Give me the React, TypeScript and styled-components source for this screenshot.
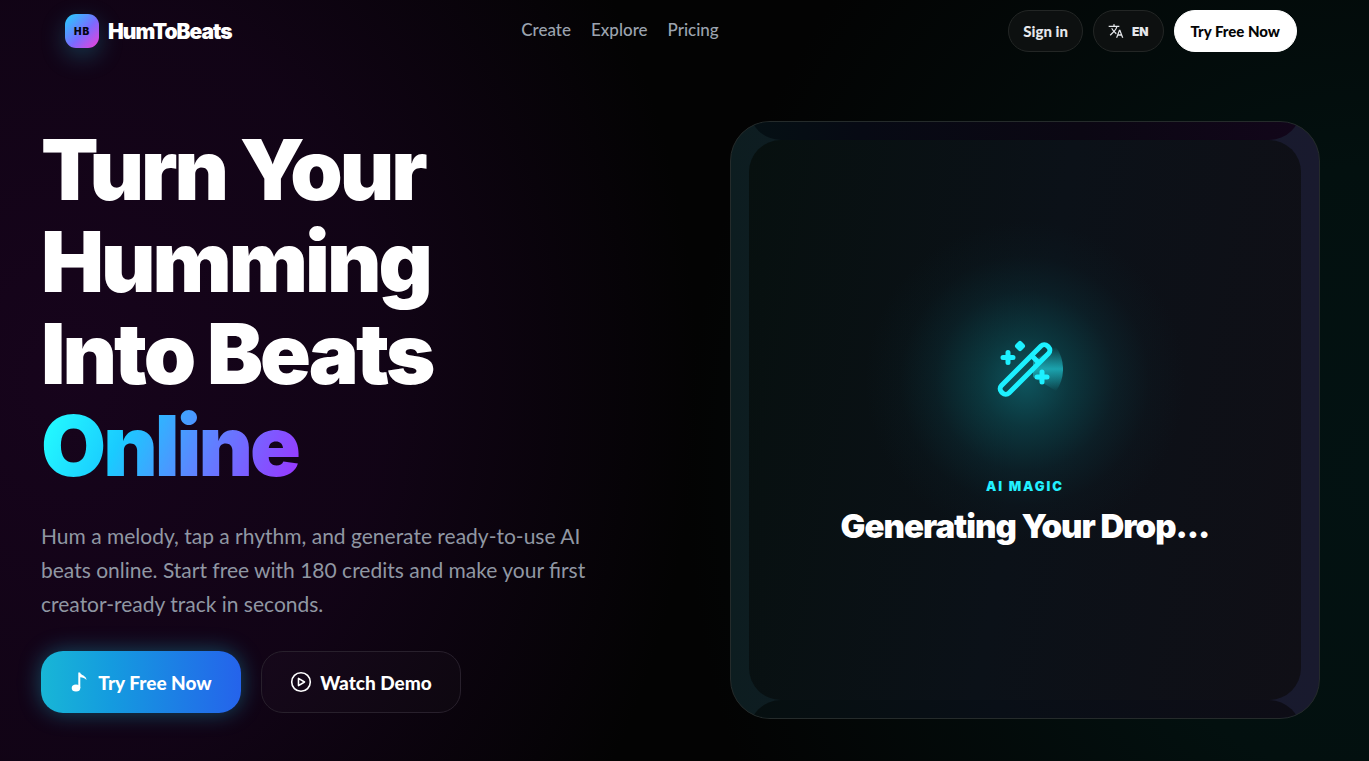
import React from "react";
import styled, { createGlobalStyle } from "styled-components";

const Global = createGlobalStyle`
  *, *::before, *::after { box-sizing: border-box; }
  body {
    margin: 0;
    background: #030303;
    color: #fff;
    font-family: Lato, "Open Sans", sans-serif;
  }
  button { font: inherit; color: inherit; cursor: pointer; }
  a { color: inherit; text-decoration: none; }
`;

const Page = styled.div`
  min-height: 100vh;
  overflow: hidden;
  background:
    radial-gradient(ellipse 46% 100% at 5% 50%, rgba(26, 4, 32, 0.85) 0%, rgba(22, 4, 28, 0.75) 50%, transparent 100%),
    radial-gradient(ellipse 50% 100% at 100% 62%, #031212 0%, #03100f 40%, transparent 100%),
    #030303;
`;

const Header = styled.header`
  display: flex;
  align-items: center;
  justify-content: space-between;
  height: 62px;
  padding: 0 72px 0 65px;
`;

const Brand = styled.a`
  display: flex;
  align-items: center;
  gap: 9px;
  font-family: Inter, sans-serif;
  font-size: 21px;
  font-weight: 900;
  letter-spacing: -1px;
`;

const Logo = styled.span`
  display: grid;
  place-items: center;
  width: 34px;
  height: 34px;
  border-radius: 11px;
  background: linear-gradient(135deg, #22d3fe 0%, #7a6bff 55%, #f03fd8 100%);
  box-shadow: 0 8px 24px rgba(34, 211, 238, 0.25);
  color: #050510;
  font-size: 10px;
  letter-spacing: 1px;
`;

const Nav = styled.nav`
  display: flex;
  gap: 20px;
  color: #9ca3af;
  font-size: 17px;
  font-weight: 500;
  line-height: 20px;
  padding-bottom: 2px;
`;

const Actions = styled.div`
  display: flex;
  gap: 10px;
`;

const Pill = styled.button<{ $solid?: boolean }>`
  display: flex;
  align-items: center;
  gap: 8px;
  height: 42px;
  padding: 0 ${(p) => (p.$solid ? 16 : 14)}px;
  border: 1px solid ${(p) => (p.$solid ? "#fff" : "#232625")};
  border-radius: 21px;
  background: ${(p) => (p.$solid ? "#fff" : "#0d1010")};
  color: ${(p) => (p.$solid ? "#050505" : "#e5e7eb")};
  font-size: 15px;
  font-weight: 900;
`;

const Language = styled.span`
  font-family: Inter, sans-serif;
  font-size: 12px;
`;

const Hero = styled.main`
  display: grid;
  grid-template-columns: minmax(0, 1fr) minmax(0, 590px);
  gap: 64px;
  padding: 59px 49px 42px 41px;
`;

const Copy = styled.section`
  padding-top: 3px;
`;

const Title = styled.h1`
  margin: 0;
  font-family: Inter, sans-serif;
  font-size: 84px;
  font-weight: 900;
  line-height: 92px;
  letter-spacing: -3px;
`;

const Line = styled.span`
  display: block;
`;

const Accent = styled.span`
  display: table;
  padding-right: 4px;
  background: linear-gradient(115deg, #22f5ff 8%, #1acbff 32%, #5b86ff 60%, #9838ff 96%);
  background-clip: text;
  -webkit-background-clip: text;
  color: transparent;
`;

const Lead = styled.p`
  max-width: 560px;
  margin: 27px 0 0;
  color: #9097a3;
  font-size: 21px;
  line-height: 34px;
`;

const Buttons = styled.div`
  display: flex;
  gap: 20px;
  margin-top: 30px;
`;

const Cta = styled.button<{ $primary?: boolean }>`
  display: flex;
  align-items: center;
  justify-content: center;
  gap: 8px;
  width: 200px;
  height: 62px;
  border: ${(p) => (p.$primary ? "0" : "1px solid #28202c")};
  border-radius: 22px;
  background: ${(p) => (p.$primary ? "linear-gradient(90deg, #18b6d6, #149bdf 35%, #2563eb)" : "rgba(255, 255, 255, 0.02)")};
  box-shadow: ${(p) => (p.$primary ? "0 0 22px rgba(24, 182, 214, 0.4)" : "none")};
  font-size: 19px;
  font-weight: 900;
`;

const Stage = styled.section`
  display: flex;
  flex-direction: column;
  align-items: center;
  justify-content: center;
  height: 598px;
  padding: 0 18px;
  overflow: hidden;
  border: 1px solid #252b2b;
  border-radius: 40px;
  background: linear-gradient(90deg, #0d1d20 0%, #141b2c 50%, #191a2e 100%);
`;

const Slide = styled.div<{ $tone: string }>`
  display: flex;
  flex: none;
  flex-direction: column;
  align-items: center;
  width: 100%;
  height: 560px;
  border-radius: 32px;
  background: ${(p) => p.$tone};
`;

const Orb = styled.div`
  display: grid;
  place-items: center;
  width: 76px;
  height: 76px;
  margin-top: 191px;
  border-radius: 50%;
`;

const Eyebrow = styled.p`
  margin: 70px 0 0;
  color: #22f0ff;
  font-family: Inter, sans-serif;
  font-size: 13px;
  font-weight: 900;
  line-height: 18px;
  letter-spacing: 2px;
`;

const Status = styled.h2`
  margin: 9px 0 0;
  font-family: Inter, sans-serif;
  font-size: 33px;
  font-weight: 900;
  line-height: 44px;
  letter-spacing: -1px;
`;

const active =
  "radial-gradient(circle at 50% 43%, rgba(16, 130, 140, .6) 0, rgba(12, 100, 108, .45) 45px, rgba(12, 66, 76, .28) 90px, rgba(12, 50, 60, .1) 125px, transparent 160px), linear-gradient(100deg, #07100f, #0b1118 50%, #100f16)";

const TranslateIcon = () => (
  <svg width="16" height="16" viewBox="0 0 24 24" fill="currentColor" aria-hidden="true">
    <path d="m12.9 15.1-2.6-2.5.1-.1A17.500 17.500 0 0 0 14.100 6H17V4h-7V2H8v2H1v2h11.200A15.700 15.700 0 0 1 9 11.400 15.600 15.600 0 0 1 6.700 8h-2a17.600 17.600 0 0 0 3 4.600L2.600 17.600 4 19l5-5 3.100 3.100zM18.500 10h-2L12 22h2l1.100-3h4.800l1.100 3h2zm-2.600 7 1.600-4.300 1.600 4.300z" />
  </svg>
);

const NoteIcon = () => (
  <svg width="20" height="22" viewBox="0 0 20 22" aria-hidden="true">
    <ellipse cx="6" cy="17" rx="4.300" ry="3.500" fill="#fff" />
    <path d="M8.300 17V1.500h1.800c.5 2.800 6.400 3 6.400 7.500-1.500-2-4-2.800-6.200-2.800V17z" fill="#fff" />
  </svg>
);

const PlayIcon = () => (
  <svg width="22" height="22" viewBox="0 0 22 22" fill="none" stroke="#fff" strokeWidth="1.600" strokeLinejoin="round" aria-hidden="true">
    <circle cx="11" cy="11" r="9.300" />
    <path d="M8.500 7.400v7.200l6-3.600z" />
  </svg>
);

const WandIcon = () => (
  <svg width="76" height="76" viewBox="0 0 76 76" fill="none" aria-hidden="true">
    <defs>
      <linearGradient id="beam" x1="0" y1="0" x2="0" y2="1">
        <stop offset="0" stopColor="#20c4d0" stopOpacity="0" />
        <stop offset=".5" stopColor="#20c4d0" stopOpacity=".75" />
        <stop offset="1" stopColor="#20c4d0" stopOpacity="0" />
      </linearGradient>
    </defs>
    <path d="M46 30 69 16a38 38 0 0 1 0 44L46 46z" fill="url(#beam)" />
    <g stroke="#1df0ff" strokeWidth="5" strokeLinecap="round" strokeLinejoin="round">
      <path d="M14.500 54.500 54 15a4.600 4.600 0 0 1 6.500 0l1 1a4.600 4.600 0 0 1 0 6.500L22 62a4.600 4.600 0 0 1-6.500 0l-1-1a4.600 4.600 0 0 1 0-6.500z" />
      <path d="m45 25 6.500 6.500M21 21.500v10M16 26.500h10M55 41v10M50 46h10" />
      <path d="m33 12.500 2.500 2.500-2.500 2.500-2.500-2.500z" fill="#1df0ff" />
    </g>
  </svg>
);

export default function App() {
  return (
    <>
      <Global />
      <Page>
        <Header>
          <Brand href="#home"><Logo>HB</Logo>HumToBeats</Brand>
          <Nav>
            <a href="#create">Create</a>
            <a href="#explore">Explore</a>
            <a href="#pricing">Pricing</a>
          </Nav>
          <Actions>
            <Pill>Sign in</Pill>
            <Pill><TranslateIcon /><Language>EN</Language></Pill>
            <Pill $solid>Try Free Now</Pill>
          </Actions>
        </Header>
        <Hero>
          <Copy>
            <Title>
              <Line>Turn Your</Line>
              <Line>Humming</Line>
              <Line>Into Beats</Line>
              <Accent>Online</Accent>
            </Title>
            <Lead>
              Hum a melody, tap a rhythm, and generate ready-to-use AI beats online. Start free with 180 credits and make your first creator-ready track in seconds.
            </Lead>
            <Buttons>
              <Cta $primary><NoteIcon />Try Free Now</Cta>
              <Cta><PlayIcon />Watch Demo</Cta>
            </Buttons>
          </Copy>
          <Stage>
            <Slide $tone="linear-gradient(90deg, #051014, #070a14 20%, #0b0713 60%, #12061a)" />
            <Slide $tone={active}>
              <Orb><WandIcon /></Orb>
              <Eyebrow>AI MAGIC</Eyebrow>
              <Status>Generating Your Drop...</Status>
            </Slide>
            <Slide $tone="linear-gradient(90deg, #060f10, #090f17 45%, #0e0d16)" />
          </Stage>
        </Hero>
      </Page>
    </>
  );
}
